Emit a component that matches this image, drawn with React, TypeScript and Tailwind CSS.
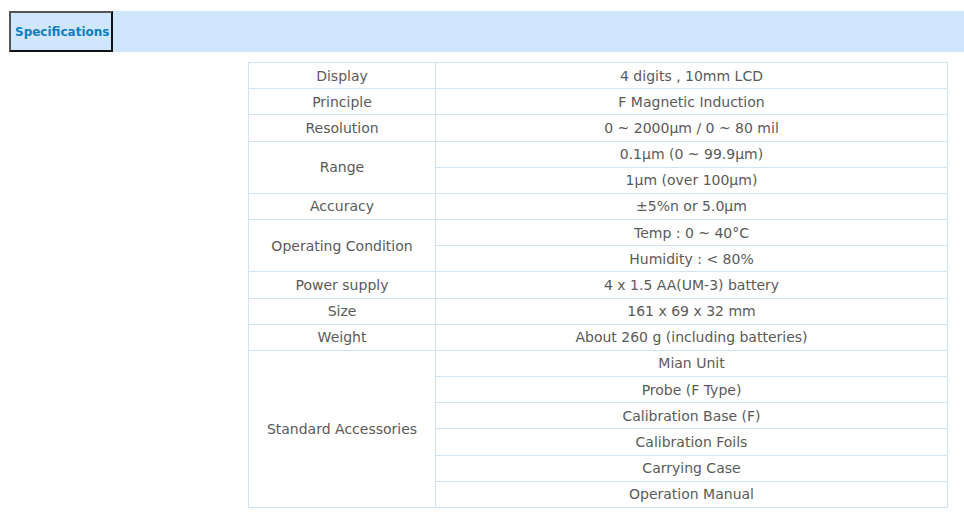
import React from 'react'

type Row = { label: string; values: string[] }

const rows: Row[] = [
    { label: 'Display', values: ['4 digits , 10mm LCD'] },
    { label: 'Principle', values: ['F Magnetic Induction'] },
    { label: 'Resolution', values: ['0 ~ 2000μm / 0 ~ 80 mil'] },
    { label: 'Range', values: ['0.1μm (0 ~ 99.9μm)', '1μm (over 100μm)'] },
    { label: 'Accuracy', values: ['±5%n or 5.0μm'] },
    { label: 'Operating Condition', values: ['Temp : 0 ~ 40°C', 'Humidity : < 80%'] },
    { label: 'Power supply', values: ['4 x 1.5 AA(UM-3) battery'] },
    { label: 'Size', values: ['161 x 69 x 32 mm'] },
    { label: 'Weight', values: ['About 260 g (including batteries)'] },
    {
        label: 'Standard Accessories',
        values: ['Mian Unit', 'Probe (F Type)', 'Calibration Base (F)', 'Calibration Foils', 'Carrying Case', 'Operation Manual'],
    },
]

export default function App() {
    return (
        <div className="w-[964px] h-[516px] bg-white pt-[11px] pl-[9px] font-['DejaVu_Sans',Verdana,sans-serif] overflow-hidden">
            {/* header bar */}
            <div className="flex h-[41px] bg-[#cfe6fc]">
                <div className="flex items-center w-[104px] border-2 border-t-[#555] border-l-[#555] border-r-[#111] border-b-[#111] pl-[4px] text-[12px] font-bold text-[#0a7fc4]">
                    Specifications
                </div>
            </div>

            <div className="pl-[239px] pt-[10px]">
                <table className="w-[700px] border-collapse text-[14px] leading-[20px] text-[#5a5a5a] text-center">
                    <colgroup>
                        <col className="w-[187px]" />
                        <col />
                    </colgroup>
                    <tbody>
                        {rows.map((r) =>
                            r.values.map((v, i) => (
                                <tr key={r.label + i} className="h-[26.18px]">
                                    {i === 0 && (
                                        <td rowSpan={r.values.length} className="border border-[#cfe3f5] p-0">
                                            {r.label}
                                        </td>
                                    )}
                                    <td className="border border-[#cfe3f5] p-0">{v}</td>
                                </tr>
                            ))
                        )}
                    </tbody>
                </table>
            </div>
        </div>
    )
}
